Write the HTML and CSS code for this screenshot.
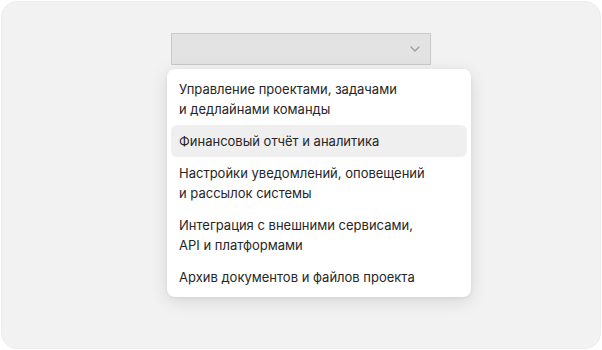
FILE: index.html
```html
<!DOCTYPE html>
<html lang="ru">
<head>
    <meta charset="UTF-8">
    <meta name="viewport" content="width=device-width, initial-scale=1.0">
    <title>Выбор раздела</title>
    <link rel="stylesheet" href="styles.css">
</head>
<body>
    <div class="frame">
        <div class="picker">
            <button class="select-box" type="button">
                <svg class="chevron" width="10" height="6" viewBox="0 0 10 6">
                    <path d="M1 1l4 4 4-4" fill="none" stroke="#9a9a9a" stroke-width="1.2" stroke-linecap="round" stroke-linejoin="round"/>
                </svg>
            </button>

            <ul class="menu">
                <li class="menu-item">Управление проектами, задачами<br>и дедлайнами команды</li>
                <li class="menu-item active">Финансовый отчёт и аналитика</li>
                <li class="menu-item">Настройки уведомлений, оповещений<br>и рассылок системы</li>
                <li class="menu-item">Интеграция с внешними сервисами,<br>API и платформами</li>
                <li class="menu-item">Архив документов и файлов проекта</li>
            </ul>
        </div>
    </div>
</body>
</html>
```

FILE: styles.css
```css
* {
    margin: 0;
    padding: 0;
    box-sizing: border-box;
    font-family: "Inter", "Noto Sans", sans-serif;
}

body {
    background-color: white;
    padding: 1px;
}

.frame {
    height: 348px;
    background-color: #f2f2f2;
    border: 1px solid #ededed;
    border-radius: 16px;
    display: flex;
    justify-content: center;
    padding-top: 31px;
}

.picker {
    display: flex;
    flex-direction: column;
    align-items: flex-start;
    width: 304px;
    margin-left: 36px;
}

.select-box {
    width: 260px;
    height: 32px;
    margin-left: 4px;
    background-color: #e3e3e3;
    border: 1px solid #c9c9c9;
    display: flex;
    align-items: center;
    justify-content: flex-end;
    padding-right: 10px;
}

.chevron {
    display: block;
}

.menu {
    list-style: none;
    margin-top: 4px;
    width: 304px;
    padding: 4px;
    background-color: white;
    border-radius: 8px;
    box-shadow: 0 4px 18px rgba(0, 0, 0, 0.12), 0 1px 3px rgba(0, 0, 0, 0.06);
}

.menu-item {
    padding: 6px 8px;
    font-size: 13px;
    line-height: 20px;
    color: #262626;
    border-radius: 6px;
}

.menu-item.active {
    background-color: #efefef;
}
```
